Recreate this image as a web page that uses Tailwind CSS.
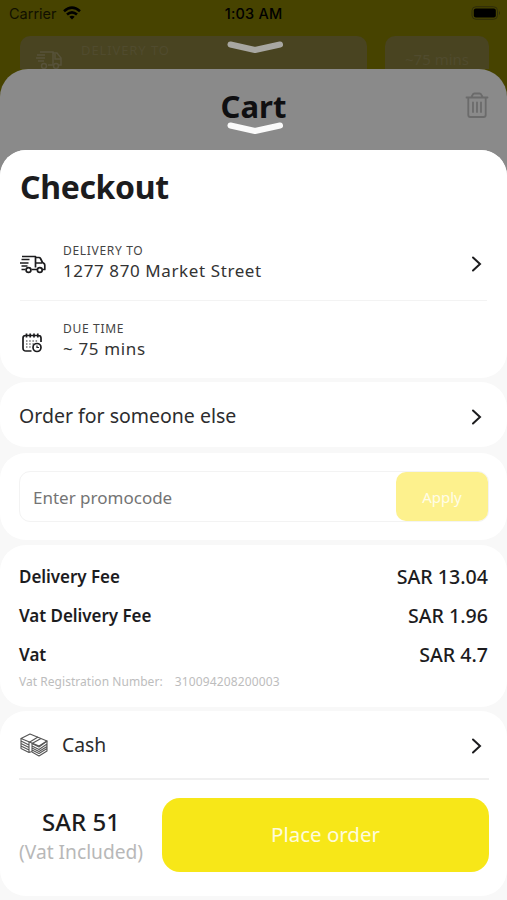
<!DOCTYPE html>
<html lang="en">
<head>
<meta charset="utf-8">
<title>Checkout</title>
<script src="https://cdn.jsdelivr.net/npm/@tailwindcss/browser@4"></script>
</head>
<body class="w-[507px] h-[900px] overflow-hidden bg-[#f8f8f8] font-['Noto_Sans','Open_Sans',sans-serif] text-[#1c1c1e]">
<div class="h-[900px] bg-[#474300] flex flex-col">
  <header class="h-[69px] shrink-0 overflow-hidden">
    <div class="relative h-9 pt-1 pl-[9px] pr-[6px] flex items-start text-black font-['Inter',sans-serif]">
      <span class="text-[14.5px] leading-[20px] text-[#111000]">Carrier</span>
      <svg class="ml-[6px] mt-[2px] w-[18px] h-[14px]" viewBox="0 0 18 14" fill="none" stroke="#000" stroke-width="2.600"><path d="M1 5.200Q9-1.800 17 5.200M4 8.600Q9 4.200 14 8.600"/><path d="M6.300 10.800Q9 8.600 11.700 10.800L9 13.600Z" fill="#000" stroke="none"/></svg>
      <span class="absolute left-0 right-0 top-1 text-center text-[14.5px] leading-[20px] font-medium tracking-[.2px]">1:03 AM</span>
      <svg class="ml-auto mt-[2px] w-[30px] h-[14px]" viewBox="0 0 30 14"><rect x="1" y=".7" width="25.500" height="12.600" rx="4" fill="none" stroke="#2f2d0a" stroke-width="1"/><rect x="2.800" y="2.500" width="22" height="9" rx="2" fill="#000"/><path d="M28 5q2 2 0 4z" fill="#2f2d0a"/></svg>
    </div>
    <div class="relative flex gap-[18px] pl-5 pr-[17px]">
      <div class="w-[347px] h-12 rounded-[10px] bg-[#494421] flex pl-[15px] pt-3 text-[#57523a]">
        <svg class="w-[27px] h-6" viewBox="0 0 27 24" fill="none" stroke="currentColor" stroke-width="1.500"><path d="M5 4h13v13h-5M2 7h8M1 10h9M3 13h6M18 5h4l4 5v7h-3M20 6v5h6"/><circle cx="9" cy="18" r="2.500"/><circle cx="21" cy="18" r="2.500"/></svg>
        <span class="ml-[19px] -mt-[7px] text-[13px] tracking-[.9px] text-[#504b2e]">DELIVERY TO</span>
      </div>
      <div class="w-[104px] h-12 rounded-[10px] bg-[#494421] pt-3 text-center text-[15px] text-[#504b2e]">~75 mins</div>
      <svg class="absolute left-[227px] top-[5px] w-14 h-[13px]" viewBox="0 0 56 13" fill="none" stroke="#a8a7a2" stroke-width="6" stroke-linecap="round" stroke-linejoin="round"><path d="M3.500 3.500L28 9L53 3.500"/></svg>
    </div>
  </header>
  <div class="grow rounded-t-[28px] bg-[#8a8a8a] flex flex-col">
    <div class="relative h-[81px] shrink-0 pt-[17px]">
      <h2 class="text-center text-[31px] leading-[40px] font-bold text-[#0f0f11]">Cart</h2>
      <svg class="absolute left-[465px] top-[23px] w-6 h-7" viewBox="0 0 24 28" fill="none" stroke="#6b6b6b" stroke-width="1.800" stroke-linecap="round" stroke-linejoin="round"><path d="M1.500 5.500h21M3.300 5.500V23q0 2 2 2h13.400q2 0 2-2V5.500M6.500 5l1-2q.7-1.500 2-1.500h5q1.300 0 2 1.500l1 2M8 10.500v9.500M12 10.500v9.500M16 10.500v9.500"/></svg>
      <svg class="absolute left-[227px] top-[53px] w-14 h-[13px]" viewBox="0 0 56 13" fill="none" stroke="#fafafa" stroke-width="6" stroke-linecap="round" stroke-linejoin="round"><path d="M3.500 3.500L28 9L53 3.500"/></svg>
    </div>
    <main class="grow rounded-t-[26px] bg-[#f8f8f8] flex flex-col">
      <section class="h-[228px] rounded-[26px] bg-white px-5">
        <h1 class="pt-[17px] text-[32px] leading-[40px] tracking-[-.35px] font-bold">Checkout</h1>
        <div class="h-[93px] mt-px border-b border-[#f3f3f3] flex items-center pt-[28px] pb-[10px]">
          <svg class="w-[26px] h-5 mt-[4px]" viewBox="0 0 26 20" fill="none" stroke="#1c1c1e" stroke-width="1.700" stroke-linejoin="round"><path d="M2 1.500H15.500V12.500M1.500 4.500h8M0 8h8.500M1.500 11h6M1.500 14.500h4M15.500 2.500h3.500q1 0 1.500 1l2 4 1.500 1q.8.600.8 1.800v4.200h-2M11.500 14.500H17M16 8h6"/><circle cx="8.500" cy="15" r="2.400"/><circle cx="19.800" cy="15" r="2.400"/></svg>
          <div class="ml-[17px]">
            <p class="text-[12px] leading-[16px] tracking-[.68px] text-[#444]">DELIVERY TO</p>
            <p class="text-[17px] leading-6 tracking-[.6px] text-[#333]">1277 870 Market Street</p>
          </div>
          <svg class="ml-auto mr-[5px] mt-px w-[11px] h-4" viewBox="0 0 11 16" fill="none" stroke="#1c1c1e" stroke-width="2" stroke-linecap="round"><path d="M2 1.500L9 8L2 14.500"/></svg>
        </div>
        <div class="h-[77px] pt-[2px] flex items-center">
          <svg class="ml-[2px] w-[21px] h-5 mt-[4px]" viewBox="0 0 21 20" fill="none" stroke="#1c1c1e" stroke-width="1.700"><path d="M9.500 18H4q-3 0-3-3V5q0-2.500 2.500-2.500h13Q19 2.500 19 5v4M4.500.5v4M8.200.5v4M12 .5v4M15.800.5v4"/><path stroke-dasharray="1.500 1.700" stroke="#777" d="M4 8h12M4 11h8M4 14h6"/><circle cx="15" cy="14.500" r="4"/><path d="M15 12.500v2h2" stroke-width="1.200"/></svg>
          <div class="ml-5">
            <p class="text-[12px] leading-[16px] tracking-[.68px] text-[#444]">DUE TIME</p>
            <p class="text-[17px] leading-6 tracking-[.65px] text-[#333]">~ 75 mins</p>
          </div>
        </div>
      </section>
      <section class="mt-1 h-[65px] rounded-[26px] bg-white pl-[19px] pr-[25px] pt-[3px] flex items-center justify-between">
        <span class="text-[19.500px] text-[#2c2c2e]">Order for someone else</span>
        <svg class="w-[11px] h-4 mt-px" viewBox="0 0 11 16" fill="none" stroke="#1c1c1e" stroke-width="2" stroke-linecap="round"><path d="M2 1.500L9 8L2 14.500"/></svg>
      </section>
      <section class="mt-[6px] h-[87px] rounded-[26px] bg-white pt-[18px] pl-[19px] pr-[18px]">
        <div class="h-[51px] rounded-[11px] border border-[#f3f3f3] flex items-center justify-between pl-[13px]">
          <span class="pt-[2px] text-[17px] text-[#747474]">Enter promocode</span>
          <span class="w-[92px] h-[49px] pt-px rounded-[10px] bg-[#fdf18d] text-white/80 text-[15px] flex items-center justify-center">Apply</span>
        </div>
      </section>
      <section class="mt-[5px] h-[162px] rounded-[26px] bg-white pl-[19px] pr-[19px] pt-[13px] font-semibold">
        <div class="h-[39px] flex items-center justify-between"><span class="text-[17px] -mt-px tracking-[-.04px]">Delivery Fee</span><span class="-mt-[2px] text-[19.600px] font-medium">SAR 13.04</span></div>
        <div class="h-[39px] flex items-center justify-between"><span class="text-[17px] -mt-px tracking-[-.04px]">Vat Delivery Fee</span><span class="-mt-[2px] text-[19.600px] font-medium">SAR 1.96</span></div>
        <div class="h-[39px] flex items-center justify-between"><span class="text-[17px] -mt-px">Vat</span><span class="-mt-[2px] text-[19.600px] font-medium">SAR 4.7</span></div>
        <p class="-mt-px flex gap-3 text-[12px] leading-4 font-normal text-[#bdbdbd]"><span class="tracking-[.04px]">Vat Registration Number:</span><span class="tracking-[.14px]">310094208200003</span></p>
      </section>
      <section class="mt-1 h-[185px] rounded-[26px] bg-white pl-[19px] pr-[18px]">
        <div class="h-[69px] border-b-2 border-[#f0f0f0] flex items-center pr-[7px]">
          <svg class="w-[30px] h-6" viewBox="0 0 30 24" fill="none" stroke="#555" stroke-width="1.100" stroke-linejoin="round"><path d="M2 5.500L11 1L28 8L20 13Z" fill="#fff"/><path d="M2 5.500v10l8 4V9.500L19 4M10 19.500l3-1V10.500L22 5.500M2 8l8 4M2 10.500l8 4M2 13l8 4M13 10.500l7 3.500L28 8v10l-8 5-7-4M13 13l7 3.500 8-5.500M13 15l7 3.500 8-5M13 17l7 3.500 8-5"/></svg>
          <span class="ml-[13px] mt-[2px] text-[19.300px] text-[#2c2c2e]">Cash</span>
          <svg class="ml-auto mt-[2px] w-[11px] h-4" viewBox="0 0 11 16" fill="none" stroke="#1c1c1e" stroke-width="2" stroke-linecap="round"><path d="M2 1.500L9 8L2 14.500"/></svg>
        </div>
        <div class="mt-[18px] flex">
          <div class="w-[124px] pt-[9px] text-center">
            <p class="text-[24px] leading-[30px] font-medium">SAR 51</p>
            <p class="text-[19.200px] leading-[30px] text-[#b8b8b8] whitespace-nowrap">(Vat Included)</p>
          </div>
          <div class="ml-[19px] w-[327px] h-[74px] pb-px rounded-[18px] bg-[#f7e718] flex items-center justify-center text-[20.500px] text-white/85">Place order</div>
        </div>
      </section>
    </main>
  </div>
</div>
</body>
</html>
